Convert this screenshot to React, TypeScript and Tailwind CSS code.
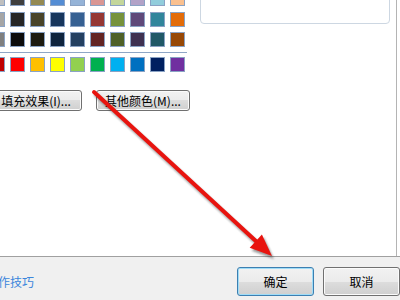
import React from "react";

const rowA = ["#bfbfbf", "#3f3f3f", "#938953", "#548dd4", "#95b3d7", "#d99694", "#c3d69b", "#b2a2c7", "#92cddc", "#fac08f"];
const rowB = ["#a5a5a5", "#262626", "#494429", "#17365d", "#366092", "#953734", "#76923c", "#5f497a", "#31859b", "#e36c09"];
const rowC = ["#7f7f7f", "#0c0c0c", "#1d1b10", "#0f243e", "#244061", "#632423", "#4f6128", "#3f3151", "#205867", "#974806"];
const rowD = ["#c00000", "#ff0000", "#ffc000", "#ffff00", "#92d050", "#00b050", "#00b0f0", "#0070c0", "#002060", "#7030a0"];

function Row({ colors, className = "" }: { colors: string[]; className?: string }) {
  return (
    <div className={"flex gap-[5px] " + className}>
      {colors.map((c, i) => (
        <div key={i} className="w-[15px] h-[15px] border border-[#8aa2c4] shrink-0" style={{ backgroundColor: c }} />
      ))}
    </div>
  );
}

const btn =
  "flex items-center justify-center border border-[#707070] rounded-[3px] bg-[linear-gradient(#f2f2f2_0%,#ebebeb_50%,#dddddd_50%,#cfcfcf_100%)] shadow-[inset_0_0_0_1px_#fbfbfb] text-[12px] text-black shrink-0";

export default function App() {
  return (
    <div className="w-[400px] h-[300px] overflow-hidden relative bg-white font-['Noto_Sans_CJK_SC',sans-serif]">
      <div className="h-[257px] border-b border-[#a0a0a0] flex">
        <div className="w-[397px] h-full border-r border-[#b4b4b4] flex">
          <div className="ml-[-10px] w-[200px] shrink-0 flex flex-col">
            <Row colors={rowA} className="mt-[-9px]" />
            <Row colors={rowB} className="mt-[6px]" />
            <Row colors={rowC} className="mt-[5px]" />
            <div className="mt-[5px] w-[197px] h-px bg-[#8ea6c6]" />
            <Row colors={rowD} className="mt-[4px]" />
            <div className="mt-[18px] flex gap-[14px]">
              <div className={btn + " w-[92px] h-[21px]"}>填充效果(I)...</div>
              <div className={btn + " w-[94px] h-[21px]"}>其他颜色(M)...</div>
            </div>
          </div>
          <div className="ml-[10px] mt-[-30px] w-[190px] h-[54px] border border-[#cdd7e2] rounded-[4px] shrink-0" />
        </div>
      </div>
      <div className="h-[43px] bg-[#f0f0f0] flex items-start pt-[10px]">
        <span className="ml-[-2px] leading-[29px] text-[12px] text-[#3c86dc]">作技巧</span>
        <div className="ml-auto flex gap-[9px]">
          <div className={btn + " w-[77px] h-[29px] !border-[#3c7fb1] !shadow-[inset_0_0_0_1px_#9fdcf7]"}>确定</div>
          <div className={btn + " w-[77px] h-[29px]"}>取消</div>
        </div>
      </div>
      <svg className="absolute inset-0 pointer-events-none" width="400" height="300">
        <defs>
          <filter id="sh" x="-20%" y="-20%" width="140%" height="140%">
            <feGaussianBlur stdDeviation="1.2" />
          </filter>
        </defs>
        <g filter="url(#sh)" opacity="0.45" transform="translate(2,3)">
          <line x1="94" y1="92" x2="258" y2="243" stroke="#222" strokeWidth="4" strokeLinecap="round" />
          <polygon points="272,256 249.7,247.8 261.9,234.6" fill="#222" />
        </g>
        <line x1="94" y1="92" x2="258" y2="243" stroke="#e8140f" strokeWidth="4" strokeLinecap="round" />
        <polygon points="272,256 249.7,247.8 261.9,234.6" fill="#e8140f" />
      </svg>
    </div>
  );
}
